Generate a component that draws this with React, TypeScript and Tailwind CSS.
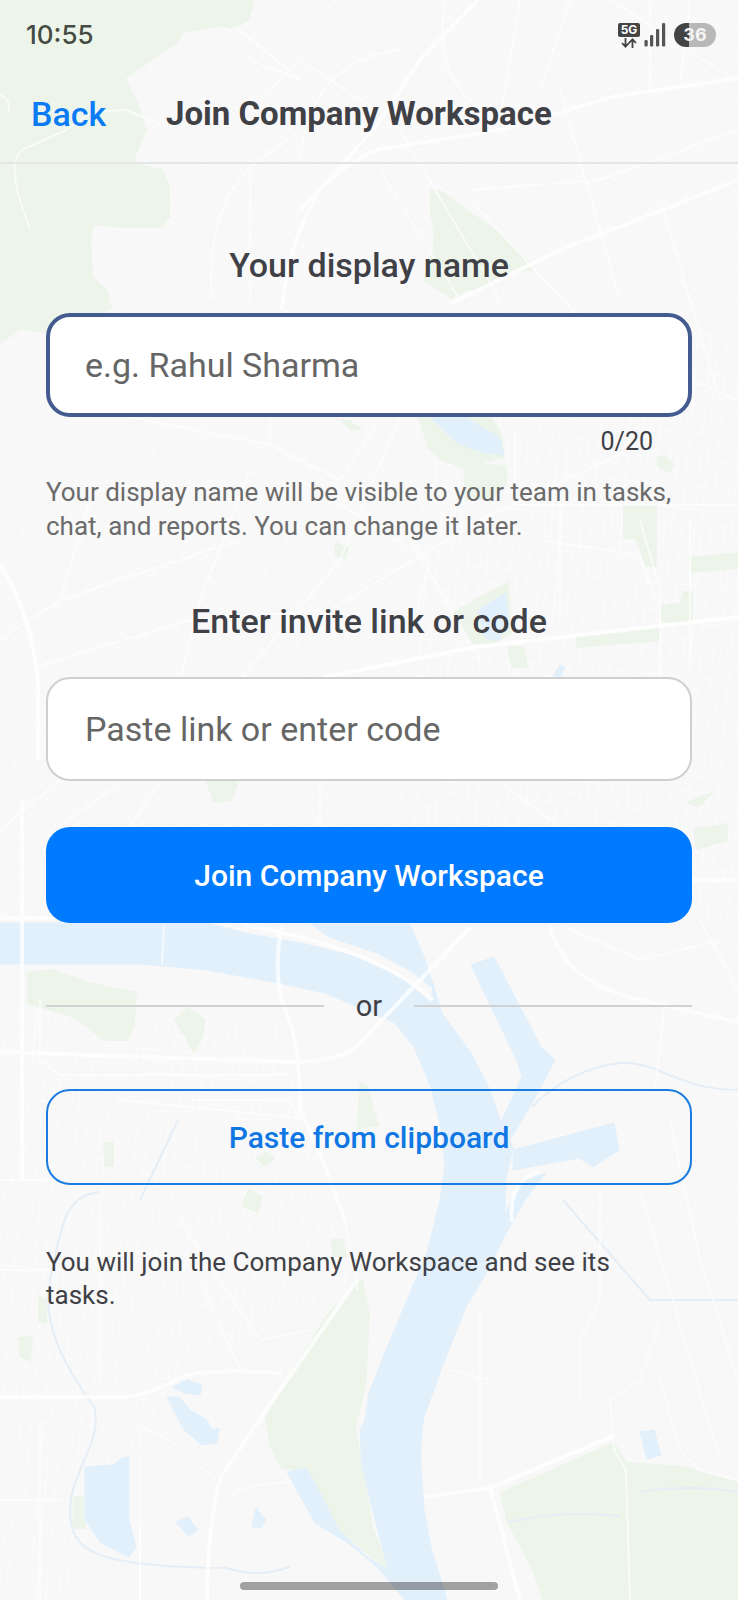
import { useState } from "react";

const LAND = [
  "M0 0H254L248 20L231 28L221 25L198 30L184 32L176 43L158 55L141 67L125 78L130 90L136 100L141 114L146 130L134 157L136 165L162 170L169 187V217L162 227H122L94 224L90 240L92 277L106 290L111 307L94 320L42 332L20 328L0 343Z",
  "M431 190L442 192L471 213L499 233L530 263L532 270L504 272L485 287L466 290L452 298L424 280L433 253L435 233L431 213Z",
  "M419 417H490L501 433L504 457L461 467L442 460L428 447Z",
  "M464 463L506 466V484L490 498L466 500Z",
  "M624 505H656V566H646L636 538H624Z",
  "M690 558L738 553V568L692 572Z",
  "M661 606L680 604L684 592H692V622H663Z",
  "M577 637L659 628V640L577 647Z",
  "M508 583L511 633L494 643H471L454 613L475 600Z",
  "M508 647H524L527 667H512Z",
  "M341 420L350 422L360 428L352 430Z",
  "M336 543L348 548L345 558L335 555Z",
  "M207 782H238L231 800L214 802Z",
  "M657 458L664 456L673 464L670 472L658 467Z",
  "M687 803L712 793L699 806Z",
  "M694 829L727 825V840L697 849Z",
  "M28 973L52 970L89 983L136 993L134 1025L127 1040H104L75 1017L28 1003Z",
  "M188 1008L205 1020L202 1037L194 1052L186 1037L175 1020Z",
  "M360 1083L366 1085L378 1125L358 1128Z",
  "M257 1158L266 1152L274 1158L265 1166Z",
  "M249 1190L262 1197L258 1212L242 1206Z",
  "M104 1143H113V1166H105Z",
  "M332 1240H342L346 1256H333Z",
  "M362 1280L369 1313L365 1387L355 1427L362 1467L372 1527L388 1570L367 1553L329 1520L306 1470L282 1468L271 1447L266 1417L287 1380L329 1313Z",
  "M501 1493L614 1443L626 1463L682 1467L738 1483V1600H544L532 1567L508 1523Z",
  "M19 1338L32 1337L30 1361L20 1356Z",
  "M74 1497H85V1528H73Z",
  "M39 1296L46 1300V1322H39Z",
];

const WATER = [
  "M0 923H207L245 933L301 943L358 957L405 980L431 1003L433 985L442 1013L471 1053L490 1090L501 1122L513 1147L506 1180L504 1237L490 1267L466 1307L442 1367Q424 1417 424 1417Q420 1440 421 1467L424 1510L431 1547L447 1600H405L377 1567L348 1543L315 1523L297 1490L287 1472L306 1468L320 1493L339 1530L367 1557L388 1570L377 1527L362 1467L360 1430L365 1420L369 1393L386 1350L410 1293L428 1250L440 1200L445 1167L442 1133L431 1087L414 1047L395 1023L358 1007L325 993L273 982L207 970L141 964H0Z",
  "M311 924H410L424 957L435 990L414 973L377 953L329 937Z",
  "M471 965L494 957L541 1047L555 1060L532 1103L510 1140L501 1122L522 1077L518 1063Z",
  "M513 1150L614 1123L619 1150L593 1167L579 1158L513 1170Z",
  "M522 1180L546 1173L525 1200L504 1237V1216Z",
  "M431 418L464 417L499 437L504 455L485 453L457 443Z",
  "M506 593L508 617L499 640L485 638L478 610Z",
  "M560 665L565 667L560 677L553 676Z",
  "M85 1467L113 1465L122 1458L129 1457V1520L136 1547L129 1557L101 1543L85 1520Z",
  "M172 1387L188 1380L202 1385L200 1395L184 1393Z",
  "M167 1397H179L190 1410L207 1420L212 1430L219 1428L217 1443L202 1445L184 1430Z",
  "M640 1432L654 1430L661 1455L647 1459Z",
  "M176 1522L188 1517L198 1530L188 1536Z",
  "M256 1508L266 1520L261 1528L252 1527Z",
];

const STREAMS = [
  "M532 1107C555 1083 588 1066 621 1063S680 1090 738 1090",
  "M100 1192C62 1195 62 1230 50 1280C42 1320 60 1360 94 1407C104 1440 71 1470 70 1510C70 1550 90 1567 226 1568C250 1575 265 1575 290 1567",
  "M178 1120L140 1200",
  "M563 1200L650 1300L738 1300",
  "M508 1522Q560 1510 620 1516M640 1492Q690 1484 738 1492",
];

const HIGHWAYS = [
  "M478 0L420 60L377 125L320 190Q288 240 282 310",
  "M738 78L612 97L500 130L376 150Q340 165 300 210",
  "M738 180L560 250L452 303",
  "M738 617L475 647L325 677",
  "M0 565Q30 610 38 680V760",
  "M0 918H60M680 880H738",
  "M22 800V1180",
  "M282 925Q272 975 285 1010Q300 1040 300 1110Q320 1150 345 1220",
  "M471 927L358 1045Q340 1062 290 1062L0 1052",
  "M550 925Q560 980 640 1000L738 1022",
  "M0 1397H125Q150 1395 180 1378Q200 1368 282 1373",
  "M357 1280L264 1413L221 1477Q208 1520 207 1600",
  "M614 1436L490 1488L425 1497M490 1488L520 1600",
  "M245 925Q380 950 433 1000",
  "M512 1222Q508 1180 540 1172",
];

const STREETS = [
  "M0 95Q12 100 8 112M30 228Q4 165 22 150L66 130L92 112L126 110L160 124",
  "M240 30L300 80L250 60M300 160Q310 60 400 50",
  "M445 0Q430 90 500 120L520 0M570 0L540 90M610 0L720 70",
  "M377 110L300 60L260 100M400 130L500 300M380 170L460 300",
  "M212 300Q205 200 260 160L300 130M250 160V300",
  "M560 90L620 300M660 200L720 400M470 200L600 340L738 400",
  "M650 0V90M690 0L680 85M738 130L600 180L470 190",
  "M270 417V445L340 480L380 420M130 417L270 445",
  "M400 417L340 560L240 680M250 470L200 600L180 680",
  "M40 665L190 620L330 610L480 520L650 440",
  "M405 530L480 660M0 640L60 600L240 540M90 500L60 600",
  "M515 430V505H738M640 520L660 590V780M560 500V620",
  "M540 540L640 555L655 600M690 520V660M300 480L430 560L410 640",
  "M120 782L60 827M160 782L130 827M320 782V827M500 782L560 827M0 830L60 780",
  "M40 1000V1060L60 1075H290M164 925L162 964",
  "M190 1100H290L300 1120M120 1100L300 1118M0 1180H50",
  "M560 925L640 960L720 940M700 920L738 990M665 1000L655 1090",
  "M600 1190V1300L580 1340V1400M660 1320L640 1380L610 1400L614 1450L626 1470L630 1600",
  "M480 1310V1480M450 1370L490 1380M738 1380L700 1260L670 1120",
  "M660 1380L680 1450L700 1470L738 1480M640 1190L720 1460",
  "M345 1220L358 1290M200 1280L240 1370M130 1420L170 1440L215 1480",
  "M230 1500Q230 1485 290 1482M0 1500H60M40 1420V1600M140 1460V1600",
  "M100 1220V1380M0 1270H50M180 1220L260 1340L310 1330",
];

function MapBackdrop() {
  return (
    <svg
      className="absolute inset-0 -z-10 h-full w-full"
      viewBox="0 0 738 1600"
      preserveAspectRatio="xMidYMin slice"
      fill="none"
      aria-hidden="true"
    >
      <defs>
        <pattern id="blocks-a" width="34" height="26" patternUnits="userSpaceOnUse" patternTransform="rotate(-24)">
          <path d="M0 4H34M0 15H20M9 0V26M24 4V26M20 21H34" stroke="#fff" />
        </pattern>
        <pattern id="blocks-b" width="30" height="38" patternUnits="userSpaceOnUse" patternTransform="rotate(5)">
          <path d="M0 6H30M0 18H18M0 29H30M5 0V38M18 6V29M25 0V38" stroke="#fff" />
        </pattern>
        <pattern id="blocks-c" width="42" height="32" patternUnits="userSpaceOnUse" patternTransform="rotate(38)">
          <path d="M0 5H42M0 19H26M12 0V32M31 5V32M26 26H42" stroke="#fff" />
        </pattern>
      </defs>
      <rect width="738" height="1600" fill="#f8f8f8" />
      <path d="M150 60L300 0H738V330H110Z" fill="url(#blocks-c)" opacity="0.45" />
      <path d="M0 340H440L400 920H0Z" fill="url(#blocks-a)" opacity="0.5" />
      <path d="M440 330H738V920H400Z" fill="url(#blocks-b)" opacity="0.6" />
      <path d="M0 1010H280L350 1290L180 1370L60 1600H0Z" fill="url(#blocks-b)" opacity="0.5" />
      <path d="M500 940H738V1240H560Z" fill="url(#blocks-c)" opacity="0.4" />
      <g fill="#edf5ea" stroke="#edf5ea" strokeWidth="2" strokeLinejoin="round">
        {LAND.map((d) => (
          <path key={d} d={d} />
        ))}
      </g>
      <g fill="#e2f0fc" stroke="#e2f0fc" strokeLinejoin="round">
        {WATER.map((d) => (
          <path key={d} d={d} />
        ))}
      </g>
      <g stroke="#e5eef6" strokeWidth="2">
        {STREAMS.map((d) => (
          <path key={d} d={d} />
        ))}
      </g>
      <g stroke="#fff" strokeWidth="2" strokeLinejoin="round" opacity="0.65">
        {STREETS.map((d) => (
          <path key={d} d={d} />
        ))}
      </g>
      <g stroke="#fff" strokeWidth="4" strokeLinejoin="round" opacity="0.8">
        {HIGHWAYS.map((d) => (
          <path key={d} d={d} />
        ))}
      </g>
    </svg>
  );
}

function StatusBar() {
  return (
    <div className="flex h-[70px] items-center justify-between pr-[22px] pl-[26px]">
      <span className="font-[Inter,sans-serif] text-[26px] leading-8 font-medium text-[#454b43]">10:55</span>
      <div className="flex items-center">
        <div className="flex w-[22px] flex-col items-center gap-px">
          <span className="flex h-[14px] w-full items-center justify-center rounded-[2px] bg-[#444] font-[Inter,sans-serif] text-[12px] leading-none font-bold text-white">
            5G
          </span>
          <svg className="h-[10px] w-4" viewBox="0 0 16 10" fill="none" stroke="#444" strokeWidth="1.8" aria-hidden="true">
            <path d="M4.5 0V8.5M1 5L4.5 8.7L8 5M11.5 10V1.5M8 5L11.5 1.3L15 5" />
          </svg>
        </div>
        <svg className="ml-1 h-6 w-[22px]" viewBox="0 0 22 24" fill="#555" aria-hidden="true">
          <rect x="0.5" y="17" width="3.2" height="6.5" rx="1.2" />
          <rect x="6" y="12" width="3.2" height="11.5" rx="1.2" />
          <rect x="12" y="6" width="3.2" height="17.5" rx="1.2" />
          <rect x="18" y="0" width="3.2" height="23.5" rx="1.2" />
        </svg>
        <span className="ml-2 flex h-6 w-[42px] items-center justify-center rounded-full bg-linear-to-r from-[#444] from-36% to-[#b8b8b8] to-36% font-[Inter,sans-serif] text-[18px] leading-none font-bold text-[#f5f5f5]">
          36
        </span>
      </div>
    </div>
  );
}

export default function App() {
  const [name, setName] = useState("");
  const [invite, setInvite] = useState("");

  const pasteInvite = async () => {
    setInvite(await navigator.clipboard.readText());
  };

  return (
    <div className="relative isolate flex min-h-screen flex-col overflow-hidden font-[Roboto,sans-serif] text-[#3f4147]">
      <MapBackdrop />
      <StatusBar />
      <header className="flex h-[94px] items-center border-b-2 border-[#e4e6e5] pb-1 pl-[31px]">
        <a href="#back" className="w-[135px] text-[34px] leading-10 font-medium text-[#0a7af5]">
          Back
        </a>
        <h1 className="text-[33px] leading-10 font-bold">Join Company Workspace</h1>
      </header>

      <form className="flex flex-col px-[46px] pt-[81px]" onSubmit={(e) => e.preventDefault()}>
        <label htmlFor="display-name" className="text-center text-[34px] leading-10 font-medium">
          Your display name
        </label>
        <input
          id="display-name"
          type="text"
          maxLength={20}
          value={name}
          onChange={(e) => setName(e.target.value)}
          placeholder="e.g. Rahul Sharma"
          className="mt-7 h-[104px] rounded-3xl border-4 border-[#435b8f] bg-white px-[35px] text-[34px] outline-none placeholder:text-[#666]"
        />
        <p className="mt-2 pr-[39px] text-right text-[25px] leading-[34px]">{name.length}/20</p>
        <p className="mt-4 text-[26px] leading-[34px] text-[#6b6b6b]">
          Your display name will be visible to your team in tasks,
          <br />
          chat, and reports. You can change it later.
        </p>

        <label htmlFor="invite" className="mt-[58px] text-center text-[34px] leading-10 font-medium">
          Enter invite link or code
        </label>
        <input
          id="invite"
          type="text"
          value={invite}
          onChange={(e) => setInvite(e.target.value)}
          placeholder="Paste link or enter code"
          className="mt-9 h-[104px] rounded-3xl border-2 border-[#cfcfcf] bg-white px-[37px] text-[34px] outline-none placeholder:text-[#666]"
        />
        <button type="submit" className="mt-[46px] h-24 rounded-3xl bg-[#007aff] text-[30px] font-medium text-white">
          Join Company Workspace
        </button>

        <div className="my-[62px] flex items-center gap-8">
          <span className="h-[2px] flex-1 bg-[#cfd1d2]" />
          <span className="text-[29px] leading-[42px]">or</span>
          <span className="h-[2px] flex-1 bg-[#cfd1d2]" />
        </div>

        <button
          type="button"
          onClick={pasteInvite}
          className="h-24 rounded-3xl border-2 border-[#1a7ce0] text-[30px] font-medium text-[#0f77e4]"
        >
          Paste from clipboard
        </button>
        <p className="mt-[61px] text-[26px] leading-[33px]">
          You will join the Company Workspace and see its
          <br />
          tasks.
        </p>
      </form>

      <div className="mt-auto flex justify-center pb-[10px]">
        <span className="h-2 w-[258px] rounded-full bg-black/35" />
      </div>
    </div>
  );
}
